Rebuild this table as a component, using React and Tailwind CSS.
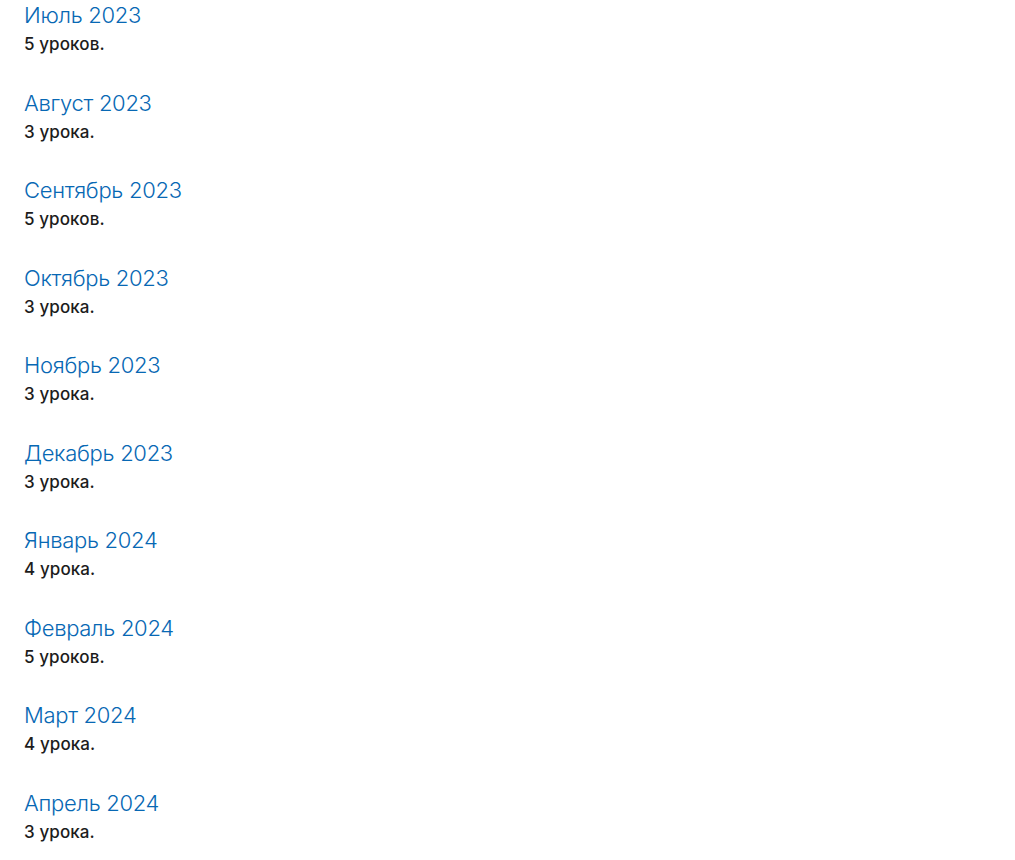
const months = [
  { title: "Июль 2023", lessons: "5 уроков." },
  { title: "Август 2023", lessons: "3 урока." },
  { title: "Сентябрь 2023", lessons: "5 уроков." },
  { title: "Октябрь 2023", lessons: "3 урока." },
  { title: "Ноябрь 2023", lessons: "3 урока." },
  { title: "Декабрь 2023", lessons: "3 урока." },
  { title: "Январь 2024", lessons: "4 урока." },
  { title: "Февраль 2024", lessons: "5 уроков." },
  { title: "Март 2024", lessons: "4 урока." },
  { title: "Апрель 2024", lessons: "3 урока." },
];

export default function App() {
  return (
    <div className="min-h-screen bg-white pl-6 font-[Inter,sans-serif]">
      {months.map((m) => (
        <div key={m.title} className="mb-[32.5px]">
          <a href="#" className="block text-[22px] leading-[30px] font-light text-[#0768b4] tracking-[-0.3px]">
            {m.title}
          </a>
          <div className="mt-[3px] text-[17px] leading-[22px] font-medium text-[#1c1c1c] tracking-[0.1px]">
            {m.lessons}
          </div>
        </div>
      ))}
    </div>
  );
}
